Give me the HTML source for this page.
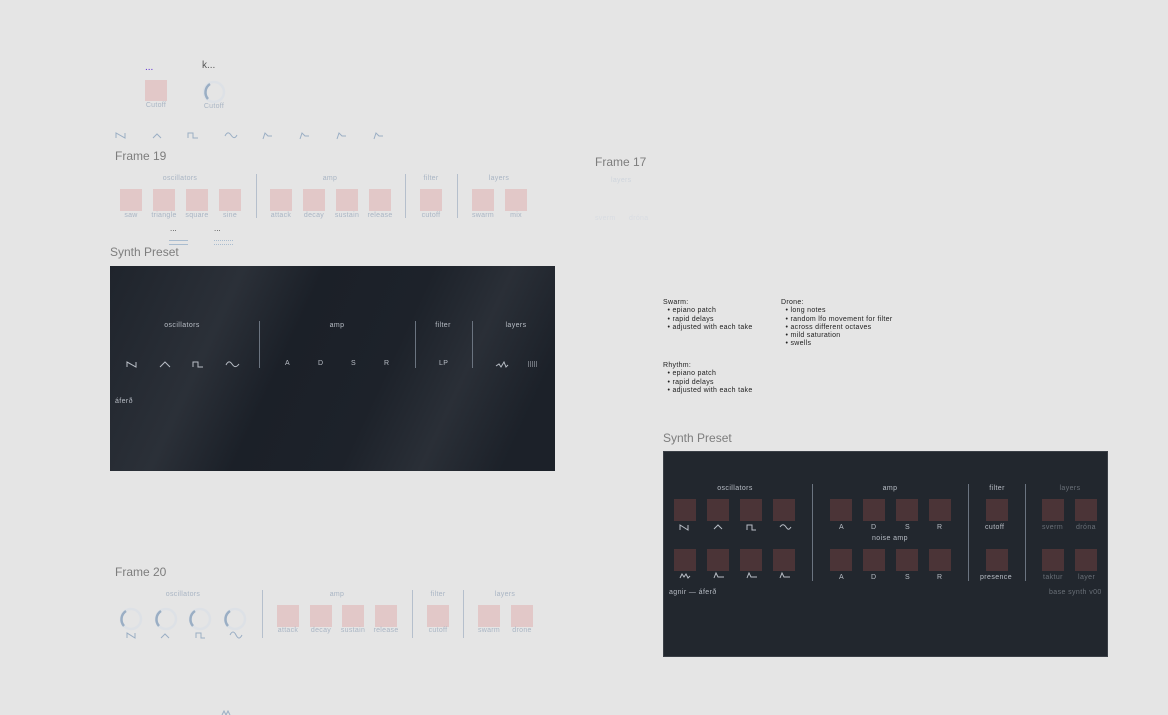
<!DOCTYPE html>
<html><head><meta charset="utf-8"><style>
*{margin:0;padding:0;box-sizing:border-box}
body{width:1168px;height:715px;background:#e5e5e5;position:relative;overflow:hidden;font-family:"Liberation Sans",sans-serif}
.a{position:absolute}
.t{position:absolute;font-size:7px;color:#a9b5c4;letter-spacing:.3px;white-space:nowrap;text-align:center}
.sq{position:absolute;width:22px;height:22px;background:#e2c8c8}
.dq{position:absolute;width:22px;height:22px;background:#4b3437}
.sep{position:absolute;width:1px;background:#b5bfcc}
.dsep{position:absolute;width:1px;background:#6b7480}
.h{position:absolute;font-size:12px;color:#7d7d7d}
.dt{position:absolute;font-size:7px;color:#b9bec6;letter-spacing:.4px;white-space:nowrap;text-align:center}
.note{position:absolute;font-size:7px;color:#222;line-height:8.3px;letter-spacing:.3px;white-space:pre}
svg{position:absolute;overflow:visible}
</style></head><body>

<div class="a" style="left:145px;top:62px;font-size:10px;color:#5a2bd0">...</div>
<div class="a" style="left:202px;top:60px;font-size:10px;color:#555">k...</div>
<div class="sq" style="left:145px;top:80px;width:22px;height:21px"></div>
<div class="t" style="left:143px;top:102px;width:26px">Cutoff</div>
<svg style="left:202px;top:80px" width="24" height="24"><circle cx="12" cy="12" r="10" fill="none" stroke="#dde1e6" stroke-width="2.5"/><path d="M6 19 A10 10 0 0 1 8 4" fill="none" stroke="#9aaec4" stroke-width="2.5"/></svg>
<div class="t" style="left:200px;top:103px;width:28px">Cutoff</div>

<svg style="left:115px;top:131px" width="280" height="10" fill="none" stroke="#9aaec4" stroke-width="1">
<path d="M1 7V2L10 7V2"/><path d="M38 7L42 3L46 7"/><path d="M73 7V2H78V7H83"/><path d="M110 5C112 1 114 1 116 4S120 8 122 4"/><path d="M148 8L150 2L153 5H157"/><path d="M185 8L187 2L190 5H194"/><path d="M222 8L224 2L227 5H231"/><path d="M259 8L261 2L264 5H268"/>
</svg>

<div class="h" style="left:115px;top:149px">Frame 19</div>
<div class="t" style="left:140px;top:175px;width:80px">oscillators</div>
<div class="t" style="left:290px;top:175px;width:80px">amp</div>
<div class="t" style="left:411px;top:175px;width:40px">filter</div>
<div class="t" style="left:479px;top:175px;width:40px">layers</div>
<div class="sep" style="left:256px;top:174px;height:44px"></div>
<div class="sep" style="left:405px;top:174px;height:44px"></div>
<div class="sep" style="left:457px;top:174px;height:44px"></div>
<div class="sq" style="left:120px;top:189px"></div><div class="sq" style="left:153px;top:189px"></div><div class="sq" style="left:186px;top:189px"></div><div class="sq" style="left:219px;top:189px"></div>
<div class="sq" style="left:270px;top:189px"></div><div class="sq" style="left:303px;top:189px"></div><div class="sq" style="left:336px;top:189px"></div><div class="sq" style="left:369px;top:189px"></div>
<div class="sq" style="left:420px;top:189px"></div><div class="sq" style="left:472px;top:189px"></div><div class="sq" style="left:505px;top:189px"></div>
<div class="t" style="left:116px;top:212px;width:30px">saw</div><div class="t" style="left:146px;top:212px;width:36px">triangle</div><div class="t" style="left:182px;top:212px;width:30px">square</div><div class="t" style="left:215px;top:212px;width:30px">sine</div>
<div class="t" style="left:266px;top:212px;width:30px">attack</div><div class="t" style="left:299px;top:212px;width:30px">decay</div><div class="t" style="left:332px;top:212px;width:30px">sustain</div><div class="t" style="left:365px;top:212px;width:30px">release</div>
<div class="t" style="left:416px;top:212px;width:30px">cutoff</div><div class="t" style="left:468px;top:212px;width:30px">swarm</div><div class="t" style="left:501px;top:212px;width:30px">mix</div>
<div class="a" style="left:170px;top:224px;font-size:8px;color:#444">...</div>
<div class="a" style="left:214px;top:224px;font-size:8px;color:#444">...</div>
<div class="a" style="left:169px;top:240px;width:19px;height:5px;border-top:1px solid #a9bccf;border-bottom:1px solid #a9bccf"></div>
<div class="a" style="left:214px;top:240px;width:19px;height:5px;border-top:1px dotted #a9bccf;border-bottom:1px dotted #a9bccf"></div>

<div class="h" style="left:110px;top:245px">Synth Preset</div>
<div class="a" style="left:110px;top:266px;width:445px;height:205px;background:linear-gradient(115deg,#1f242c 0%,#2b3038 25%,#1b2028 40%,#1d222a 60%,#2a2f37 75%,#1c2129 90%)"></div>
<div class="dt" style="left:140px;top:322px;width:84px">oscillators</div>
<div class="dt" style="left:317px;top:322px;width:40px">amp</div>
<div class="dt" style="left:423px;top:322px;width:40px">filter</div>
<div class="dt" style="left:496px;top:322px;width:40px">layers</div>
<div class="dsep" style="left:259px;top:321px;height:47px"></div>
<div class="dsep" style="left:415px;top:321px;height:47px"></div>
<div class="dsep" style="left:472px;top:321px;height:47px"></div>
<svg style="left:127px;top:361px" width="120" height="8" fill="none" stroke="#b9bec6" stroke-width="1">
<path d="M0 6V1L9 6V1"/><path d="M33 6L38 1L43 6"/><path d="M66 6V1H71V6H76"/><path d="M99 4C101 0 103 0 105 3S109 7 112 3"/></svg>
<div class="dt" style="left:285px;top:360px">A</div><div class="dt" style="left:318px;top:360px">D</div><div class="dt" style="left:351px;top:360px">S</div><div class="dt" style="left:384px;top:360px">R</div>
<div class="dt" style="left:439px;top:360px">LP</div>
<svg style="left:496px;top:361px" width="40" height="8" fill="none" stroke="#b9bec6" stroke-width="1"><path d="M0 5L3 3L5 6L8 1L10 6L12 4"/><path d="M32 1H42M32 3H42M32 5H42" stroke-dasharray="1 1"/></svg>
<div class="dt" style="left:115px;top:398px">áferð</div>

<div class="h" style="left:595px;top:155px">Frame 17</div>
<div class="t" style="left:611px;top:177px;color:#cfd5dd">layers</div>
<div class="t" style="left:595px;top:215px;color:#d8dce2">sverm</div>
<div class="t" style="left:629px;top:215px;color:#d8dce2">dróna</div>

<div class="note" style="left:663px;top:299px">Swarm:
  • epiano patch
  • rapid delays
  • adjusted with each take</div>
<div class="note" style="left:781px;top:299px">Drone:
  • long notes
  • random lfo movement for filter
  • across different octaves
  • mild saturation
  • swells</div>
<div class="note" style="left:663px;top:362px">Rhythm:
  • epiano patch
  • rapid delays
  • adjusted with each take</div>

<div class="h" style="left:663px;top:431px">Synth Preset</div>
<div class="a" style="left:663px;top:451px;width:445px;height:206px;background:#22272e;border:1px solid #3a3f46"></div>
<div class="dt" style="left:695px;top:485px;width:80px">oscillators</div>
<div class="dt" style="left:870px;top:485px;width:40px">amp</div>
<div class="dt" style="left:977px;top:485px;width:40px">filter</div>
<div class="dt" style="left:1050px;top:485px;width:40px;color:#6a7078">layers</div>
<div class="dsep" style="left:812px;top:484px;height:97px"></div>
<div class="dsep" style="left:968px;top:484px;height:97px"></div>
<div class="dsep" style="left:1025px;top:484px;height:97px"></div>
<div class="dq" style="left:674px;top:499px"></div><div class="dq" style="left:707px;top:499px"></div><div class="dq" style="left:740px;top:499px"></div><div class="dq" style="left:773px;top:499px"></div>
<div class="dq" style="left:830px;top:499px"></div><div class="dq" style="left:863px;top:499px"></div><div class="dq" style="left:896px;top:499px"></div><div class="dq" style="left:929px;top:499px"></div>
<div class="dq" style="left:986px;top:499px"></div><div class="dq" style="left:1042px;top:499px"></div><div class="dq" style="left:1075px;top:499px"></div>
<div class="dq" style="left:674px;top:549px"></div><div class="dq" style="left:707px;top:549px"></div><div class="dq" style="left:740px;top:549px"></div><div class="dq" style="left:773px;top:549px"></div>
<div class="dq" style="left:830px;top:549px"></div><div class="dq" style="left:863px;top:549px"></div><div class="dq" style="left:896px;top:549px"></div><div class="dq" style="left:929px;top:549px"></div>
<div class="dq" style="left:986px;top:549px"></div><div class="dq" style="left:1042px;top:549px"></div><div class="dq" style="left:1075px;top:549px"></div>
<svg style="left:680px;top:524px" width="120" height="56" fill="none" stroke="#b9bec6" stroke-width="1">
<path d="M0 6V1L8 6V1"/><path d="M34 5L38 1L42 5"/><path d="M67 6V1H72V6H76"/><path d="M100 3C102 0 104 0 106 3S109 6 111 3"/>
<path d="M0 54L2 50L4 53L6 50L8 54L10 52"/><path d="M34 54L36 49L38 53H44"/><path d="M67 54L69 49L71 53H77"/><path d="M100 54L102 49L104 53H110"/></svg>
<div class="dt" style="left:839px;top:524px">A</div><div class="dt" style="left:871px;top:524px">D</div><div class="dt" style="left:905px;top:524px">S</div><div class="dt" style="left:937px;top:524px">R</div>
<div class="dt" style="left:985px;top:524px">cutoff</div>
<div class="dt" style="left:1042px;top:524px;color:#6a7078">sverm</div><div class="dt" style="left:1076px;top:524px;color:#6a7078">dróna</div>
<div class="dt" style="left:872px;top:535px">noise amp</div>
<div class="dt" style="left:839px;top:574px">A</div><div class="dt" style="left:871px;top:574px">D</div><div class="dt" style="left:905px;top:574px">S</div><div class="dt" style="left:937px;top:574px">R</div>
<div class="dt" style="left:980px;top:574px">presence</div>
<div class="dt" style="left:1043px;top:574px;color:#6a7078">taktur</div><div class="dt" style="left:1078px;top:574px;color:#6a7078">layer</div>
<div class="dt" style="left:669px;top:589px">agnir — áferð</div>
<div class="dt" style="left:1049px;top:589px;color:#6a7078">base synth v00</div>

<div class="h" style="left:115px;top:565px">Frame 20</div>
<div class="t" style="left:143px;top:591px;width:80px">oscillators</div>
<div class="t" style="left:317px;top:591px;width:40px">amp</div>
<div class="t" style="left:418px;top:591px;width:40px">filter</div>
<div class="t" style="left:485px;top:591px;width:40px">layers</div>
<div class="sep" style="left:262px;top:590px;height:48px"></div>
<div class="sep" style="left:412px;top:590px;height:48px"></div>
<div class="sep" style="left:463px;top:590px;height:48px"></div>
<svg style="left:118px;top:607px" width="130" height="34" fill="none" stroke-width="2.5">
<g stroke="#dde1e6"><circle cx="13" cy="12" r="10"/><circle cx="48" cy="12" r="10"/><circle cx="82" cy="12" r="10"/><circle cx="117" cy="12" r="10"/></g>
<g stroke="#9aaec4"><path d="M6 19A10 10 0 0 1 8 4"/><path d="M41 19A10 10 0 0 1 43 4"/><path d="M75 19A10 10 0 0 1 77 4"/><path d="M110 19A10 10 0 0 1 112 4"/></g>
<g stroke="#9aaec4" stroke-width="1"><path d="M9 31V26L17 31V26"/><path d="M43 31L47 27L51 31"/><path d="M78 31V26H83V31H87"/><path d="M112 28C114 24 116 24 118 28S122 32 124 28"/></g></svg>
<div class="sq" style="left:277px;top:605px"></div><div class="sq" style="left:310px;top:605px"></div><div class="sq" style="left:342px;top:605px"></div><div class="sq" style="left:375px;top:605px"></div>
<div class="sq" style="left:427px;top:605px"></div><div class="sq" style="left:478px;top:605px"></div><div class="sq" style="left:511px;top:605px"></div>
<div class="t" style="left:273px;top:627px;width:30px">attack</div><div class="t" style="left:306px;top:627px;width:30px">decay</div><div class="t" style="left:338px;top:627px;width:30px">sustain</div><div class="t" style="left:371px;top:627px;width:30px">release</div>
<div class="t" style="left:423px;top:627px;width:30px">cutoff</div><div class="t" style="left:474px;top:627px;width:30px">swarm</div><div class="t" style="left:507px;top:627px;width:30px">drone</div>
<svg style="left:222px;top:711px" width="10" height="4" fill="none" stroke="#9aaec4" stroke-width="1"><path d="M0 4L2 0L4 4L6 0L8 4"/></svg>
</body></html>
